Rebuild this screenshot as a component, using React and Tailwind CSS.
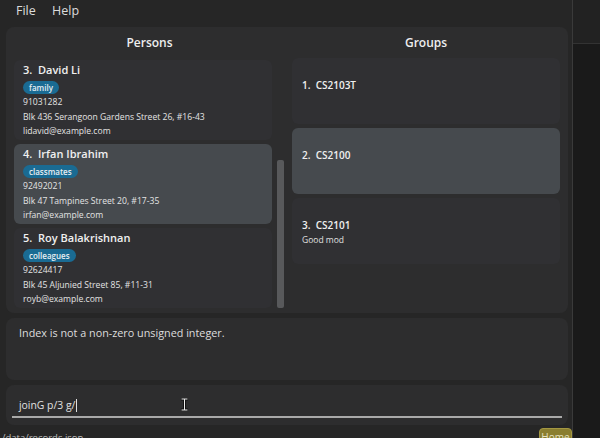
import React from "react";

const persons = [
  { n: 3, name: "David Li", tag: "family", phone: "91031282", addr: "Blk 436 Serangoon Gardens Street 26, #16-43", email: "lidavid@example.com" },
  { n: 4, name: "Irfan Ibrahim", tag: "classmates", phone: "92492021", addr: "Blk 47 Tampines Street 20, #17-35", email: "irfan@example.com", sel: true },
  { n: 5, name: "Roy Balakrishnan", tag: "colleagues", phone: "92624417", addr: "Blk 45 Aljunied Street 85, #11-31", email: "royb@example.com" },
];

const groups = [
  { n: 1, name: "CS2103T", desc: "" },
  { n: 2, name: "CS2100", desc: "", sel: true },
  { n: 3, name: "CS2101", desc: "Good mod" },
];

function PersonCard({ p }) {
  return (
    <div className={`h-[80px] shrink-0 rounded-[6px] pl-[9px] ${p.sel ? "bg-[#464a4e]" : "bg-[#303033]"}`}>
      <div className="h-[20px] leading-[20px] text-[11px] font-semibold text-[#f0f0f0] whitespace-pre">{`${p.n}.  ${p.name}`}</div>
      <div className="mt-[1px] flex">
        <span className="h-[13px] leading-[13px] rounded-full bg-[#1a6b93] px-[6px] text-[8px] font-semibold text-[#e8eef2]">{p.tag}</span>
      </div>
      <div className="text-[8.6px] leading-[14.6px] text-[#e4e4e4] mt-[1px]">
        <div>{p.phone}</div>
        <div>{p.addr}</div>
        <div>{p.email}</div>
      </div>
    </div>
  );
}

function GroupCard({ g }) {
  return (
    <div className={`h-[66px] shrink-0 rounded-[6px] pl-[10px] pt-[17px] ${g.sel ? "bg-[#464a4e]" : "bg-[#303033]"}`}>
      <div className="h-[20px] leading-[20px] text-[10px] font-semibold text-[#f0f0f0] whitespace-pre">{`${g.n}.  ${g.name}`}</div>
      <div className="h-[12px] leading-[10px] text-[8.5px] text-[#e0e0e0]">{g.desc}</div>
    </div>
  );
}

export default function App() {
  return (
    <div className="w-[600px] h-[438px] flex overflow-hidden bg-[#1b1b1b] font-['Open_Sans',sans-serif]">
      <div className="w-[573px] h-full shrink-0 flex flex-col bg-[#262626] border-r border-[#3a3a3a]">
        {/* Menu bar */}
        <div className="h-[22px] flex items-center pl-[16px] text-[12.5px] text-[#dcdcdc] shrink-0">
          <span className="w-[36px]">File</span>
          <span>Help</span>
        </div>
        {/* Main panel */}
        <div className="mt-[5px] mx-[6px] w-[562px] h-[286px] shrink-0 rounded-[8px] bg-[#2d2d2e] flex pl-[8px] pr-[8px] gap-[7px]">
          {/* Persons */}
          <div className="w-[271px] flex flex-col">
            <div className="pt-[6px] h-[26px] leading-[20px] text-center text-[12px] font-semibold text-[#eeeeee]">Persons</div>
            <div className="mt-[7px] h-[248px] flex gap-[4px] overflow-hidden">
              <div className="w-[258px] flex flex-col gap-[4px]">
                {persons.map((p) => (
                  <PersonCard key={p.n} p={p} />
                ))}
              </div>
              <div className="w-[9px] h-full flex flex-col items-center">
                <div className="mt-[100px] w-[7px] h-[148px] rounded-[2px] bg-[#58595b]" />
              </div>
            </div>
          </div>
          {/* Groups */}
          <div className="w-[268px] flex flex-col">
            <div className="pt-[6px] h-[26px] leading-[20px] text-center text-[12px] font-semibold text-[#eeeeee]">Groups</div>
            <div className="mt-[5px] flex flex-col gap-[4px]">
              {groups.map((g) => (
                <GroupCard key={g.n} g={g} />
              ))}
            </div>
          </div>
        </div>
        {/* Result box */}
        <div className="mt-[5px] mx-[6px] w-[562px] h-[62px] shrink-0 rounded-[8px] bg-[#2d2d2e] pl-[13px] pt-[7px] text-[10.8px] leading-[16px] text-[#dedede]">
          Index is not a non-zero unsigned integer.
        </div>
        {/* Command box */}
        <div className="mt-[5px] mx-[6px] w-[562px] h-[40px] shrink-0 rounded-[8px] bg-[#2d2d2e] px-[6px] relative">
          <div className="pt-[10px] pl-[7px] h-[31px] flex items-center text-[10.4px] text-[#e0e0e0]">
            <span>joinG p/3 g/</span>
            <span className="ml-[1px] w-[1px] h-[13px] bg-[#e0e0e0]" />
          </div>
          <div className="h-[2px] w-[550px] bg-[#a9a9a9]" />
          <svg className="absolute left-[174px] top-[13px]" width="9" height="13" viewBox="0 0 9 13">
            <path d="M1 1h7M1 12h7M4.5 1v11" stroke="#111" strokeWidth="3" />
            <path d="M1.5 1h6M1.5 12h6M4.5 1v11" stroke="#eee" strokeWidth="1" />
          </svg>
        </div>
        {/* Status bar */}
        <div className="mt-[3px] h-[10px] overflow-hidden flex justify-between pl-[2px]">
          <span className="text-[9.5px] leading-[20px] text-[#bdbdbd]">/data/records.json</span>
          <div className="w-[33px] h-[14px] rounded-t-[4px] bg-[#8a7e2f] border border-[#a39742] text-[10px] leading-[16px] text-[#e6e2c0] text-center overflow-hidden">Home</div>
        </div>
      </div>
      <div className="flex-1 flex flex-col">
        <div className="h-[44px] bg-[#222222] border-b border-[#333333]" />
        <div className="flex-1 bg-[#1a1a1a]" />
      </div>
    </div>
  );
}
